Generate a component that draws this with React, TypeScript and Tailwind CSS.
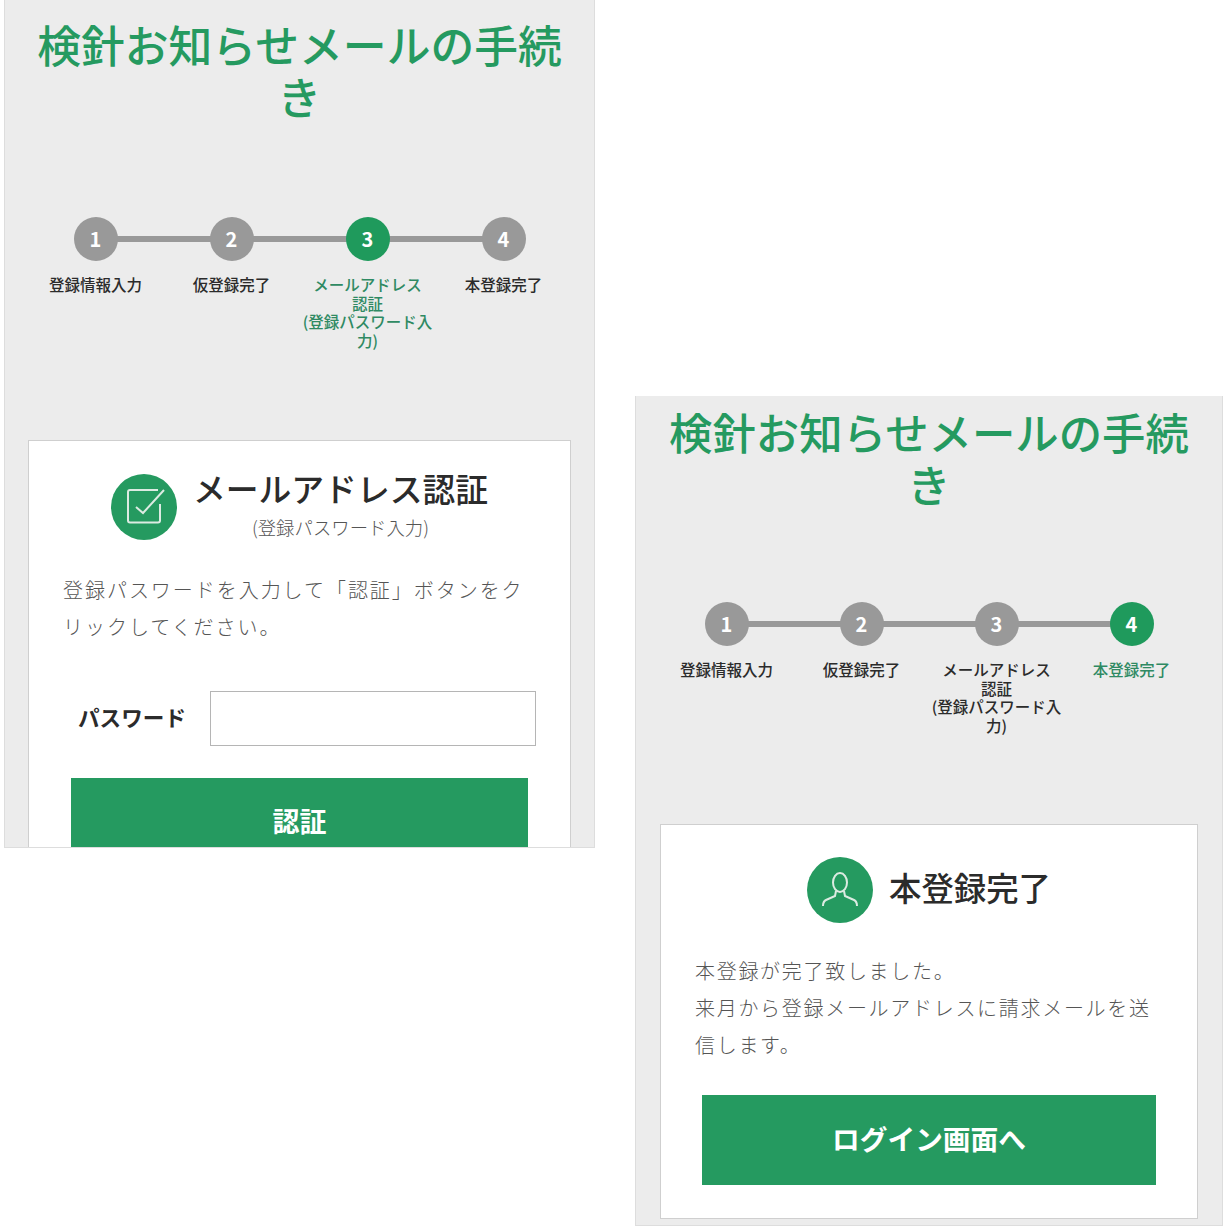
const FONT = "font-['Noto_Sans_CJK_JP','Noto_Sans',sans-serif]";

const STEPS = ["登録情報入力", "仮登録完了", "メールアドレス\n認証\n(登録パスワード入力)", "本登録完了"];

function Stepper({ active, width }: { active: number; width: string }) {
  return (
    <div className={"grid grid-cols-4 mx-auto " + width}>
      {STEPS.map((s, i) => (
        <div key={i} className="relative flex flex-col items-center">
          {i < 3 && <div className="absolute left-1/2 top-[19px] h-[6px] w-full bg-[#999999]" />}
          <div
            className={
              "relative w-[44px] h-[44px] rounded-full flex items-center justify-center text-white text-[20px] font-bold " +
              (i === active ? "bg-[#1f9a5c]" : "bg-[#999999]")
            }
          >
            {i + 1}
          </div>
          <div
            className={
              "mt-[14px] w-[136px] text-center text-[15.5px] leading-[18.6px] font-medium whitespace-pre-line " +
              (i === active ? "text-[#2f8a63]" : "text-[#2b2b2b]")
            }
          >
            {s}
          </div>
        </div>
      ))}
    </div>
  );
}

function CheckIcon() {
  return (
    <svg viewBox="0 0 66 66" className="w-[66px] h-[66px] shrink-0">
      <circle cx="33" cy="33" r="33" fill="#259a60" />
      <path d="M49 30v16.5a2 2 0 0 1-2 2H19a2 2 0 0 1-2-2V18a2 2 0 0 1 2-2h28" fill="none" stroke="#dcebe2" strokeWidth="2" />
      <path d="M25 33l7 6 21-23" fill="none" stroke="#dcebe2" strokeWidth="2" />
    </svg>
  );
}

function UserIcon() {
  return (
    <svg viewBox="0 0 66 66" className="w-[66px] h-[66px] shrink-0">
      <circle cx="33" cy="33" r="33" fill="#259a60" />
      <ellipse cx="33" cy="25.5" rx="7" ry="9.5" fill="none" stroke="#dcebe2" strokeWidth="2" />
      <path d="M16 49c0-3 1-5 3-6l9-4 1-5M50 49c0-3-1-5-3-6l-9-4-1-5" fill="none" stroke="#dcebe2" strokeWidth="2" />
    </svg>
  );
}

function Title({ size }: { size: string }) {
  return (
    <h1 className={"text-center text-[#259a60] leading-[52px] font-medium px-[30px] " + size}>
      検針お知らせメールの手続き
    </h1>
  );
}

function Button({ label, mt, size }: { label: string; mt: string; size: string }) {
  return (
    <div className={"bg-[#259a60] h-[90px] pb-[4px] flex items-center justify-center text-white font-bold shrink-0 " + size + " " + mt}>
      {label}
    </div>
  );
}

export default function App() {
  return (
    <div className={"w-[1225px] h-[1228px] bg-white flex items-start " + FONT}>
      <section className="ml-[4px] w-[591px] h-[848px] overflow-hidden bg-[#ececec] border-x border-b border-[#dddddd] pt-[18px] shrink-0">
        <Title size="text-[43.8px]" />
        <div className="mt-[95px]">
          <Stepper active={2} width="w-[544px]" />
        </div>
        <div className="mt-[91px] mx-[23px] h-[500px] bg-white border border-[#cfcfcf] px-[34px] pt-[33px]">
          <div className="flex justify-center gap-[16px]">
            <CheckIcon />
            <div className="text-center -mt-[3px]">
              <div className="text-[32.8px] leading-[34px] font-medium text-[#2b2b2b]">メールアドレス認証</div>
              <div className="mt-[10px] text-[18.4px] leading-[24px] font-light text-[#555555]">(登録パスワード入力)</div>
            </div>
          </div>
          <p className="mt-[31px] text-[20px] leading-[37px] tracking-[0.098em] font-light text-[#555555]">
            登録パスワードを入力して「認証」ボタンをクリックしてください。
          </p>
          <div className="mt-[46px] flex items-center">
            <div className="w-[147px] pl-[15px] pb-[4px] text-[21.6px] font-bold text-[#2b2b2b] shrink-0">パスワード</div>
            <div className="h-[55px] flex-1 border border-[#b5b5b5] bg-white" />
          </div>
          <Button label="認証" size="text-[27px]" mt="mt-[32px] mx-[8px]" />
        </div>
      </section>

      <section className="ml-[40px] mt-[396px] w-[588px] h-[830px] overflow-hidden bg-[#ececec] border-x border-b border-[#dddddd] pt-[9px] shrink-0">
        <Title size="text-[43.4px]" />
        <div className="mt-[93px]">
          <Stepper active={3} width="w-[540px]" />
        </div>
        <div className="mt-[90px] mx-[24px] h-[395px] bg-white border border-[#cfcfcf] px-[34px] pt-[32px]">
          <div className="flex justify-center gap-[16px]">
            <UserIcon />
            <div className="mt-[10px] text-[32.4px] leading-[40px] font-medium text-[#2b2b2b]">本登録完了</div>
          </div>
          <p className="mt-[29px] text-[20px] leading-[37px] tracking-[0.085em] font-light text-[#555555]">
            本登録が完了致しました。
            <br />
            来月から登録メールアドレスに請求メールを送信します。
          </p>
          <Button label="ログイン画面へ" size="text-[27.7px]" mt="mt-[32px] mx-[7px]" />
        </div>
      </section>
    </div>
  );
}
